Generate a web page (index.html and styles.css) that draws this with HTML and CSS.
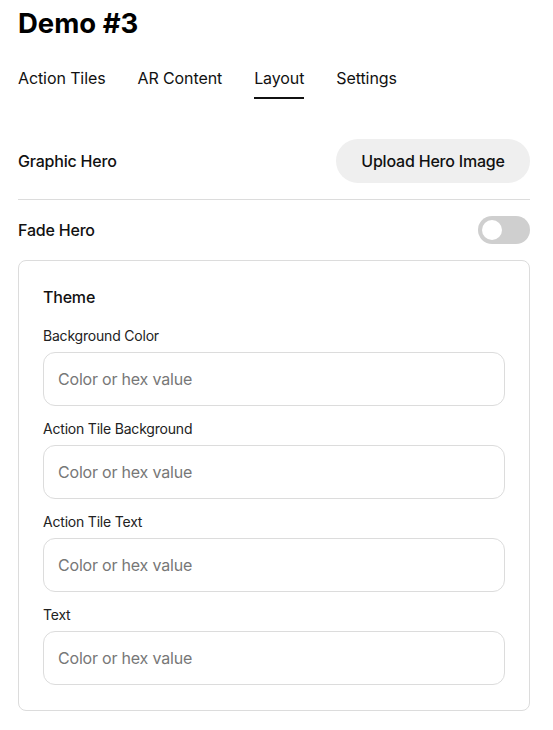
FILE: index.html
```html
<!DOCTYPE html>
<html>
<head>
<meta charset="utf-8">
<link rel="stylesheet" href="styles.css">
</head>
<body>
<div class="page">
  <h1 class="title">Demo #3</h1>
  <nav class="tabs">
    <span class="tab">Action Tiles</span>
    <span class="tab">AR Content</span>
    <span class="tab active">Layout</span>
    <span class="tab">Settings</span>
  </nav>
  <div class="row hero-row">
    <span class="row-label">Graphic Hero</span>
    <button class="upload">Upload Hero Image</button>
  </div>
  <div class="divider"></div>
  <div class="row fade-row">
    <span class="row-label">Fade Hero</span>
    <span class="toggle"><span class="knob"></span></span>
  </div>
  <section class="card">
    <h2 class="card-title">Theme</h2>
    <label class="field">
      <span class="field-label">Background Color</span>
      <input class="field-input" placeholder="Color or hex value">
    </label>
    <label class="field">
      <span class="field-label">Action Tile Background</span>
      <input class="field-input" placeholder="Color or hex value">
    </label>
    <label class="field">
      <span class="field-label">Action Tile Text</span>
      <input class="field-input" placeholder="Color or hex value">
    </label>
    <label class="field">
      <span class="field-label">Text</span>
      <input class="field-input" placeholder="Color or hex value">
    </label>
  </section>
</div>
</body>
</html>
```
FILE: styles.css
```css
* { box-sizing: border-box; }
html, body { margin: 0; padding: 0; background: #fff; }
body {
  font-family: Inter, "Liberation Sans", Arial, sans-serif;
  color: #111;
  letter-spacing: -0.2px;
}
.page {
  width: 553px;
  padding: 7px 23px 20px 18px;
}
.title {
  margin: 0;
  font-size: 27.5px;
  line-height: 32px;
  font-weight: 700;
  color: #000;
  letter-spacing: 0;
}
.tabs {
  display: flex;
  gap: 32px;
  margin-top: 27px;
}
.tab {
  font-size: 16px;
  line-height: 24px;
  padding-bottom: 7px;
  border-bottom: 2px solid transparent;
  color: #111;
  letter-spacing: -0.1px;
}
.tab.active { border-bottom-color: #111; }
.row {
  display: flex;
  justify-content: space-between;
  align-items: center;
}
.hero-row { margin-top: 40px; }
.row-label {
  font-size: 16px;
  font-weight: 500;
  color: #111;
}
.upload {
  height: 44px;
  width: 194px;
  border: none;
  border-radius: 22px;
  background: #efefef;
  font-family: inherit;
  font-size: 16px;
  font-weight: 500;
  letter-spacing: -0.2px;
  color: #111;
}
.divider {
  height: 1px;
  background: #dcdcdc;
  margin-top: 16px;
}
.fade-row { margin-top: 16px; }
.toggle {
  width: 52px;
  height: 28px;
  border-radius: 14px;
  background: #cfcfcf;
  display: flex;
  align-items: center;
  padding-left: 4px;
}
.knob {
  width: 20px;
  height: 20px;
  border-radius: 50%;
  background: #fff;
}
.card {
  margin-top: 16px;
  border: 1px solid #dcdcdc;
  border-radius: 8px;
  padding: 24px 24px 25px;
}
.card-title {
  margin: 0 0 18px;
  font-size: 16px;
  line-height: 24px;
  font-weight: 500;
  color: #111;
}
.field {
  display: flex;
  flex-direction: column;
  gap: 8px;
}
.field + .field { margin-top: 14px; }
.field-label {
  font-size: 14px;
  line-height: 17px;
  color: #222;
}
.field-input {
  height: 54px;
  border: 1px solid #dcdcdc;
  border-radius: 12px;
  padding: 0 14px;
  font-family: inherit;
  font-size: 16px;
  letter-spacing: -0.2px;
  color: #111;
  outline: none;
}
.field-input::placeholder { color: #777; }
```
